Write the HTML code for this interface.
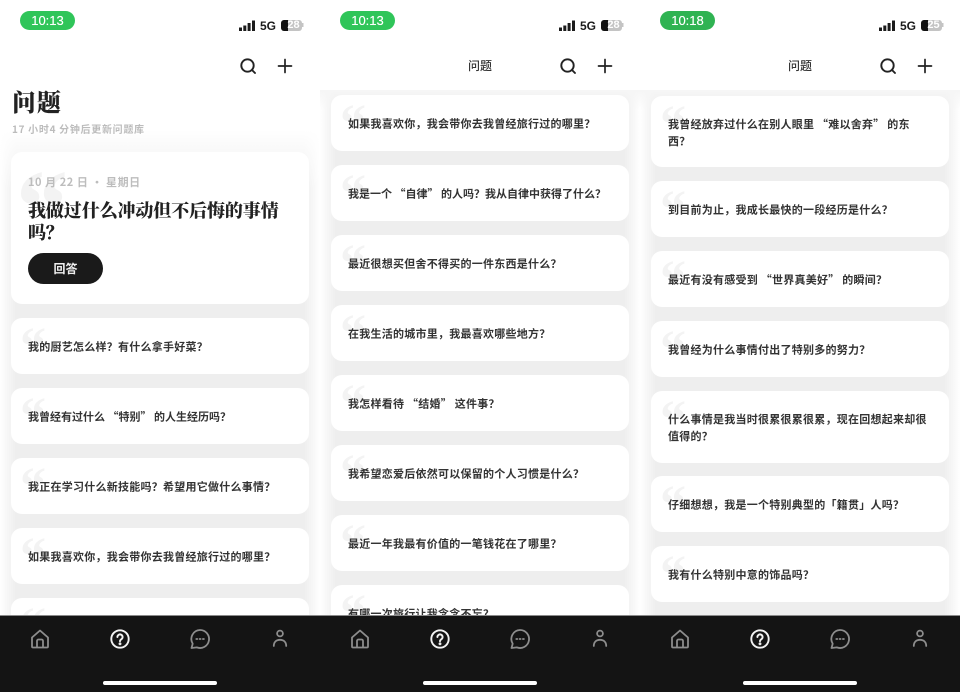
<!DOCTYPE html>
<html lang="zh">
<head>
<meta charset="utf-8">
<style>
html,body{margin:0;padding:0;width:960px;height:692px;overflow:hidden;background:#fff}
body{font-family:"Noto Sans CJK SC","Liberation Sans",sans-serif;position:relative}
.p{position:absolute;top:0;width:320px;height:692px;overflow:hidden;background:#fff;filter:blur(.35px)}
.p,.p *{box-sizing:border-box}
.bg{position:absolute;left:0;right:0;bottom:0;background:linear-gradient(90deg,#fff 0,#f8f8f8 6px,#eeeeee 16px,#eeeeee 304px,#f8f8f8 314px,#fff 100%)}
.fade{position:absolute;left:0;top:130px;width:320px;height:60px;background:linear-gradient(#fff,rgba(255,255,255,0))}
.band{position:absolute;left:0;top:90px;width:320px;height:20px;background:linear-gradient(rgba(246,246,246,1),rgba(246,246,246,0))}
.c{position:absolute;left:11px;width:298px;background:#fff;border-radius:11px;height:56px}
.c:before{content:"\201C";position:absolute;left:9px;top:3px;font:bold 52px/52px "Liberation Serif",serif;color:#f3f3f3}
.c.big:before{font-size:104px;line-height:104px;left:5px;top:3px}
.c span{position:absolute;left:17px;right:4px;top:50%;transform:translateY(-50%);margin-top:1px;font-size:11px;line-height:17px;font-weight:700;color:#333;letter-spacing:.25px}
.c span.n{letter-spacing:0}
.hdr{position:absolute;left:0;top:0;width:320px;height:90px;background:#fff}
.pill{position:absolute;left:20px;top:11px;width:55px;height:19px;border-radius:10px;color:#fff;font:400 13px/19px "Liberation Sans",sans-serif;text-align:center;text-shadow:0 0 .4px #fff}
.five{position:absolute;left:260px;top:19px;font:700 12px/14px "Liberation Sans",sans-serif;color:#1c1c1c}
.bat{position:absolute;left:281px;top:20px;width:21px;height:11px;border-radius:3px;background:linear-gradient(90deg,#111 0,#111 7px,#c4c4c4 7px);color:#fff;font:700 11px/11px "Liberation Sans",sans-serif;text-align:center;padding-left:4px}
.ttl{position:absolute;left:0;width:320px;top:57px;text-align:center;font-size:12px;line-height:18px;font-weight:500;color:#333}
.tab{position:absolute;left:0;top:615px;width:320px;height:77px;background:#141414;border-top:1px solid #8a8a8a}
.home{position:absolute;left:103px;top:65px;width:114px;height:4px;border-radius:2px;background:#fff}
svg{position:absolute;overflow:visible}
</style>
</head>
<body>

<!-- PANEL 1 -->
<div class="p" style="left:0">
  <div class="bg" style="top:130px"></div>
  <div class="fade"></div>
  <div class="pill" style="background:#2fc559">10:13</div>
  <svg style="left:239px;top:20px" width="17" height="11"><path d="M0 7.500h3V11H0zM4.300 5.500h3V11h-3zM8.600 3h3v8h-3zM13 .5h3V11h-3z" fill="#1c1c1c"/></svg>
  <div class="five">5G</div>
  <div class="bat">28</div>
  <svg style="left:302px;top:23px" width="2" height="5"><rect width="1.500" height="4" fill="#c4c4c4"/></svg>
  <svg style="left:239px;top:57px" width="18" height="18" fill="none" stroke="#222" stroke-width="1.900" stroke-linecap="round"><circle cx="8.500" cy="8.500" r="6.200"/><path d="M13 13l3 3"/></svg>
  <svg style="left:277px;top:58px" width="16" height="16" fill="none" stroke="#222" stroke-width="1.700" stroke-linecap="round"><path d="M8 1.500v13M1.500 8h13"/></svg>
  <div style="position:absolute;left:12px;top:86px;font:900 24px/29px 'Noto Serif CJK SC',serif;color:#222;letter-spacing:1px">问题</div>
  <div style="position:absolute;left:12px;top:121px;font-size:10px;line-height:15px;font-weight:700;color:#bcbcbc;letter-spacing:.7px">17 小时4 分钟后更新问题库</div>

  <div class="c big" style="top:152px;height:152px">
    <div style="position:absolute;left:17px;top:22px;font-size:11px;line-height:16px;font-weight:700;color:#bdbdbd;letter-spacing:.55px">10 月 22 日 · 星期日</div>
    <div style="position:absolute;left:17px;top:47px;width:260px;font:900 18px/22px 'Noto Serif CJK SC',serif;color:#222;letter-spacing:-.1px">我做过什么冲动但不后悔的事情吗&#xFF1F;</div>
    <div style="position:absolute;left:17px;top:101px;width:75px;height:31px;border-radius:16px;background:#1a1a1a;color:#eee;font-size:12px;line-height:31px;text-align:center;font-weight:700">回答</div>
  </div>
  <div class="c" style="top:318px"><span>我的厨艺怎么样&#xFF1F;有什么拿手好菜&#xFF1F;</span></div>
  <div class="c" style="top:388px"><span class="n">我曾经有过什么 “特别” 的人生经历吗&#xFF1F;</span></div>
  <div class="c" style="top:458px"><span>我正在学习什么新技能吗&#xFF1F;希望用它做什么事情&#xFF1F;</span></div>
  <div class="c" style="top:528px"><span>如果我喜欢你&#xFF0C;我会带你去我曾经旅行过的哪里&#xFF1F;</span></div>
  <div class="c" style="top:598px"></div>

  <div class="tab">
    <svg style="left:30px;top:13px" width="20" height="20" fill="none" stroke="#8d8d8d" stroke-width="1.800" stroke-linejoin="round"><path d="M10 1.500L2 8.500V17.500a1 1 0 0 0 1 1h14a1 1 0 0 0 1-1V8.500z"/><path d="M7 18.500V12a1.500 1.500 0 0 1 1.500-1.500h3A1.500 1.500 0 0 1 13 12v6.500"/></svg>
    <svg style="left:110px;top:13px" width="20" height="20" fill="none" stroke="#f2f2f2" stroke-width="1.900" stroke-linecap="round"><circle cx="10" cy="10" r="8.700"/><path d="M7.400 8a2.600 2.600 0 1 1 4 2.200c-.9.600-1.400 1-1.400 2"/><circle cx="10" cy="14.800" r=".5" fill="#f2f2f2"/></svg>
    <svg style="left:190px;top:13px" width="20" height="20" fill="none" stroke="#8d8d8d" stroke-width="1.800" stroke-linejoin="round"><path d="M10 1a9 9 0 1 1-3.200 17.400L1.500 19l1.200-4.300A9 9 0 0 1 10 1z"/><path d="M6.300 10h1M9.600 10h1M12.900 10h1" stroke-linecap="round"/></svg>
    <svg style="left:270px;top:13px" width="20" height="20" fill="none" stroke="#8d8d8d" stroke-width="1.800" stroke-linecap="round"><circle cx="10" cy="4.500" r="2.900"/><path d="M3.800 17c0-4 2.600-6.200 6.200-6.200s6.200 2.200 6.200 6.200"/></svg>
    <div class="home"></div>
  </div>
</div>

<!-- PANEL 2 -->
<div class="p" style="left:320px">
  <div class="bg" style="top:90px"></div>
  <div class="band"></div>
  <div class="hdr"></div>
  <div class="pill" style="background:#2fc559">10:13</div>
  <svg style="left:239px;top:20px" width="17" height="11"><path d="M0 7.500h3V11H0zM4.300 5.500h3V11h-3zM8.600 3h3v8h-3zM13 .5h3V11h-3z" fill="#1c1c1c"/></svg>
  <div class="five">5G</div>
  <div class="bat">28</div>
  <svg style="left:302px;top:23px" width="2" height="5"><rect width="1.500" height="4" fill="#c4c4c4"/></svg>
  <div class="ttl">问题</div>
  <svg style="left:239px;top:57px" width="18" height="18" fill="none" stroke="#222" stroke-width="1.900" stroke-linecap="round"><circle cx="8.500" cy="8.500" r="6.200"/><path d="M13 13l3 3"/></svg>
  <svg style="left:277px;top:58px" width="16" height="16" fill="none" stroke="#222" stroke-width="1.700" stroke-linecap="round"><path d="M8 1.500v13M1.500 8h13"/></svg>

  <div class="c" style="top:95px"><span>如果我喜欢你&#xFF0C;我会带你去我曾经旅行过的哪里&#xFF1F;</span></div>
  <div class="c" style="top:165px"><span class="n">我是一个 “自律” 的人吗&#xFF1F;我从自律中获得了什么&#xFF1F;</span></div>
  <div class="c" style="top:235px"><span>最近很想买但舍不得买的一件东西是什么&#xFF1F;</span></div>
  <div class="c" style="top:305px"><span>在我生活的城市里&#xFF0C;我最喜欢哪些地方&#xFF1F;</span></div>
  <div class="c" style="top:375px"><span>我怎样看待 “结婚” 这件事&#xFF1F;</span></div>
  <div class="c" style="top:445px"><span>我希望恋爱后依然可以保留的个人习惯是什么&#xFF1F;</span></div>
  <div class="c" style="top:515px"><span>最近一年我最有价值的一笔钱花在了哪里&#xFF1F;</span></div>
  <div class="c" style="top:585px"><span>有哪一次旅行让我念念不忘&#xFF1F;</span></div>

  <div class="tab">
    <svg style="left:30px;top:13px" width="20" height="20" fill="none" stroke="#8d8d8d" stroke-width="1.800" stroke-linejoin="round"><path d="M10 1.500L2 8.500V17.500a1 1 0 0 0 1 1h14a1 1 0 0 0 1-1V8.500z"/><path d="M7 18.500V12a1.500 1.500 0 0 1 1.500-1.500h3A1.500 1.500 0 0 1 13 12v6.500"/></svg>
    <svg style="left:110px;top:13px" width="20" height="20" fill="none" stroke="#f2f2f2" stroke-width="1.900" stroke-linecap="round"><circle cx="10" cy="10" r="8.700"/><path d="M7.400 8a2.600 2.600 0 1 1 4 2.200c-.9.600-1.400 1-1.400 2"/><circle cx="10" cy="14.800" r=".5" fill="#f2f2f2"/></svg>
    <svg style="left:190px;top:13px" width="20" height="20" fill="none" stroke="#8d8d8d" stroke-width="1.800" stroke-linejoin="round"><path d="M10 1a9 9 0 1 1-3.200 17.400L1.500 19l1.200-4.300A9 9 0 0 1 10 1z"/><path d="M6.300 10h1M9.600 10h1M12.900 10h1" stroke-linecap="round"/></svg>
    <svg style="left:270px;top:13px" width="20" height="20" fill="none" stroke="#8d8d8d" stroke-width="1.800" stroke-linecap="round"><circle cx="10" cy="4.500" r="2.900"/><path d="M3.800 17c0-4 2.600-6.200 6.200-6.200s6.200 2.200 6.200 6.200"/></svg>
    <div class="home"></div>
  </div>
</div>

<!-- PANEL 3 -->
<div class="p" style="left:640px">
  <div class="bg" style="top:90px"></div>
  <div class="band"></div>
  <div class="hdr"></div>
  <div class="pill" style="background:#2fb352">10:18</div>
  <svg style="left:239px;top:20px" width="17" height="11"><path d="M0 7.500h3V11H0zM4.300 5.500h3V11h-3zM8.600 3h3v8h-3zM13 .5h3V11h-3z" fill="#1c1c1c"/></svg>
  <div class="five">5G</div>
  <div class="bat">25</div>
  <svg style="left:302px;top:23px" width="2" height="5"><rect width="1.500" height="4" fill="#c4c4c4"/></svg>
  <div class="ttl">问题</div>
  <svg style="left:239px;top:57px" width="18" height="18" fill="none" stroke="#222" stroke-width="1.900" stroke-linecap="round"><circle cx="8.500" cy="8.500" r="6.200"/><path d="M13 13l3 3"/></svg>
  <svg style="left:277px;top:58px" width="16" height="16" fill="none" stroke="#222" stroke-width="1.700" stroke-linecap="round"><path d="M8 1.500v13M1.500 8h13"/></svg>

  <div class="c" style="top:96px;height:71px"><span>我曾经放弃过什么在别人眼里 “难以舍弃” 的东<br>西&#xFF1F;</span></div>
  <div class="c" style="top:181px"><span>到目前为止&#xFF0C;我成长最快的一段经历是什么&#xFF1F;</span></div>
  <div class="c" style="top:251px"><span>最近有没有感受到 “世界真美好” 的瞬间&#xFF1F;</span></div>
  <div class="c" style="top:321px"><span>我曾经为什么事情付出了特别多的努力&#xFF1F;</span></div>
  <div class="c" style="top:391px;height:72px"><span>什么事情是我当时很累很累很累&#xFF0C;现在回想起来却很<br>值得的&#xFF1F;</span></div>
  <div class="c" style="top:476px"><span>仔细想想&#xFF0C;我是一个特别典型的「籍贯」人吗&#xFF1F;</span></div>
  <div class="c" style="top:546px"><span>我有什么特别中意的饰品吗&#xFF1F;</span></div>

  <div class="tab">
    <svg style="left:30px;top:13px" width="20" height="20" fill="none" stroke="#8d8d8d" stroke-width="1.800" stroke-linejoin="round"><path d="M10 1.500L2 8.500V17.500a1 1 0 0 0 1 1h14a1 1 0 0 0 1-1V8.500z"/><path d="M7 18.500V12a1.500 1.500 0 0 1 1.500-1.500h3A1.500 1.500 0 0 1 13 12v6.500"/></svg>
    <svg style="left:110px;top:13px" width="20" height="20" fill="none" stroke="#f2f2f2" stroke-width="1.900" stroke-linecap="round"><circle cx="10" cy="10" r="8.700"/><path d="M7.400 8a2.600 2.600 0 1 1 4 2.200c-.9.600-1.400 1-1.400 2"/><circle cx="10" cy="14.800" r=".5" fill="#f2f2f2"/></svg>
    <svg style="left:190px;top:13px" width="20" height="20" fill="none" stroke="#8d8d8d" stroke-width="1.800" stroke-linejoin="round"><path d="M10 1a9 9 0 1 1-3.200 17.400L1.500 19l1.200-4.300A9 9 0 0 1 10 1z"/><path d="M6.300 10h1M9.600 10h1M12.900 10h1" stroke-linecap="round"/></svg>
    <svg style="left:270px;top:13px" width="20" height="20" fill="none" stroke="#8d8d8d" stroke-width="1.800" stroke-linecap="round"><circle cx="10" cy="4.500" r="2.900"/><path d="M3.800 17c0-4 2.600-6.200 6.200-6.200s6.200 2.200 6.200 6.200"/></svg>
    <div class="home"></div>
  </div>
</div>

</body>
</html>
